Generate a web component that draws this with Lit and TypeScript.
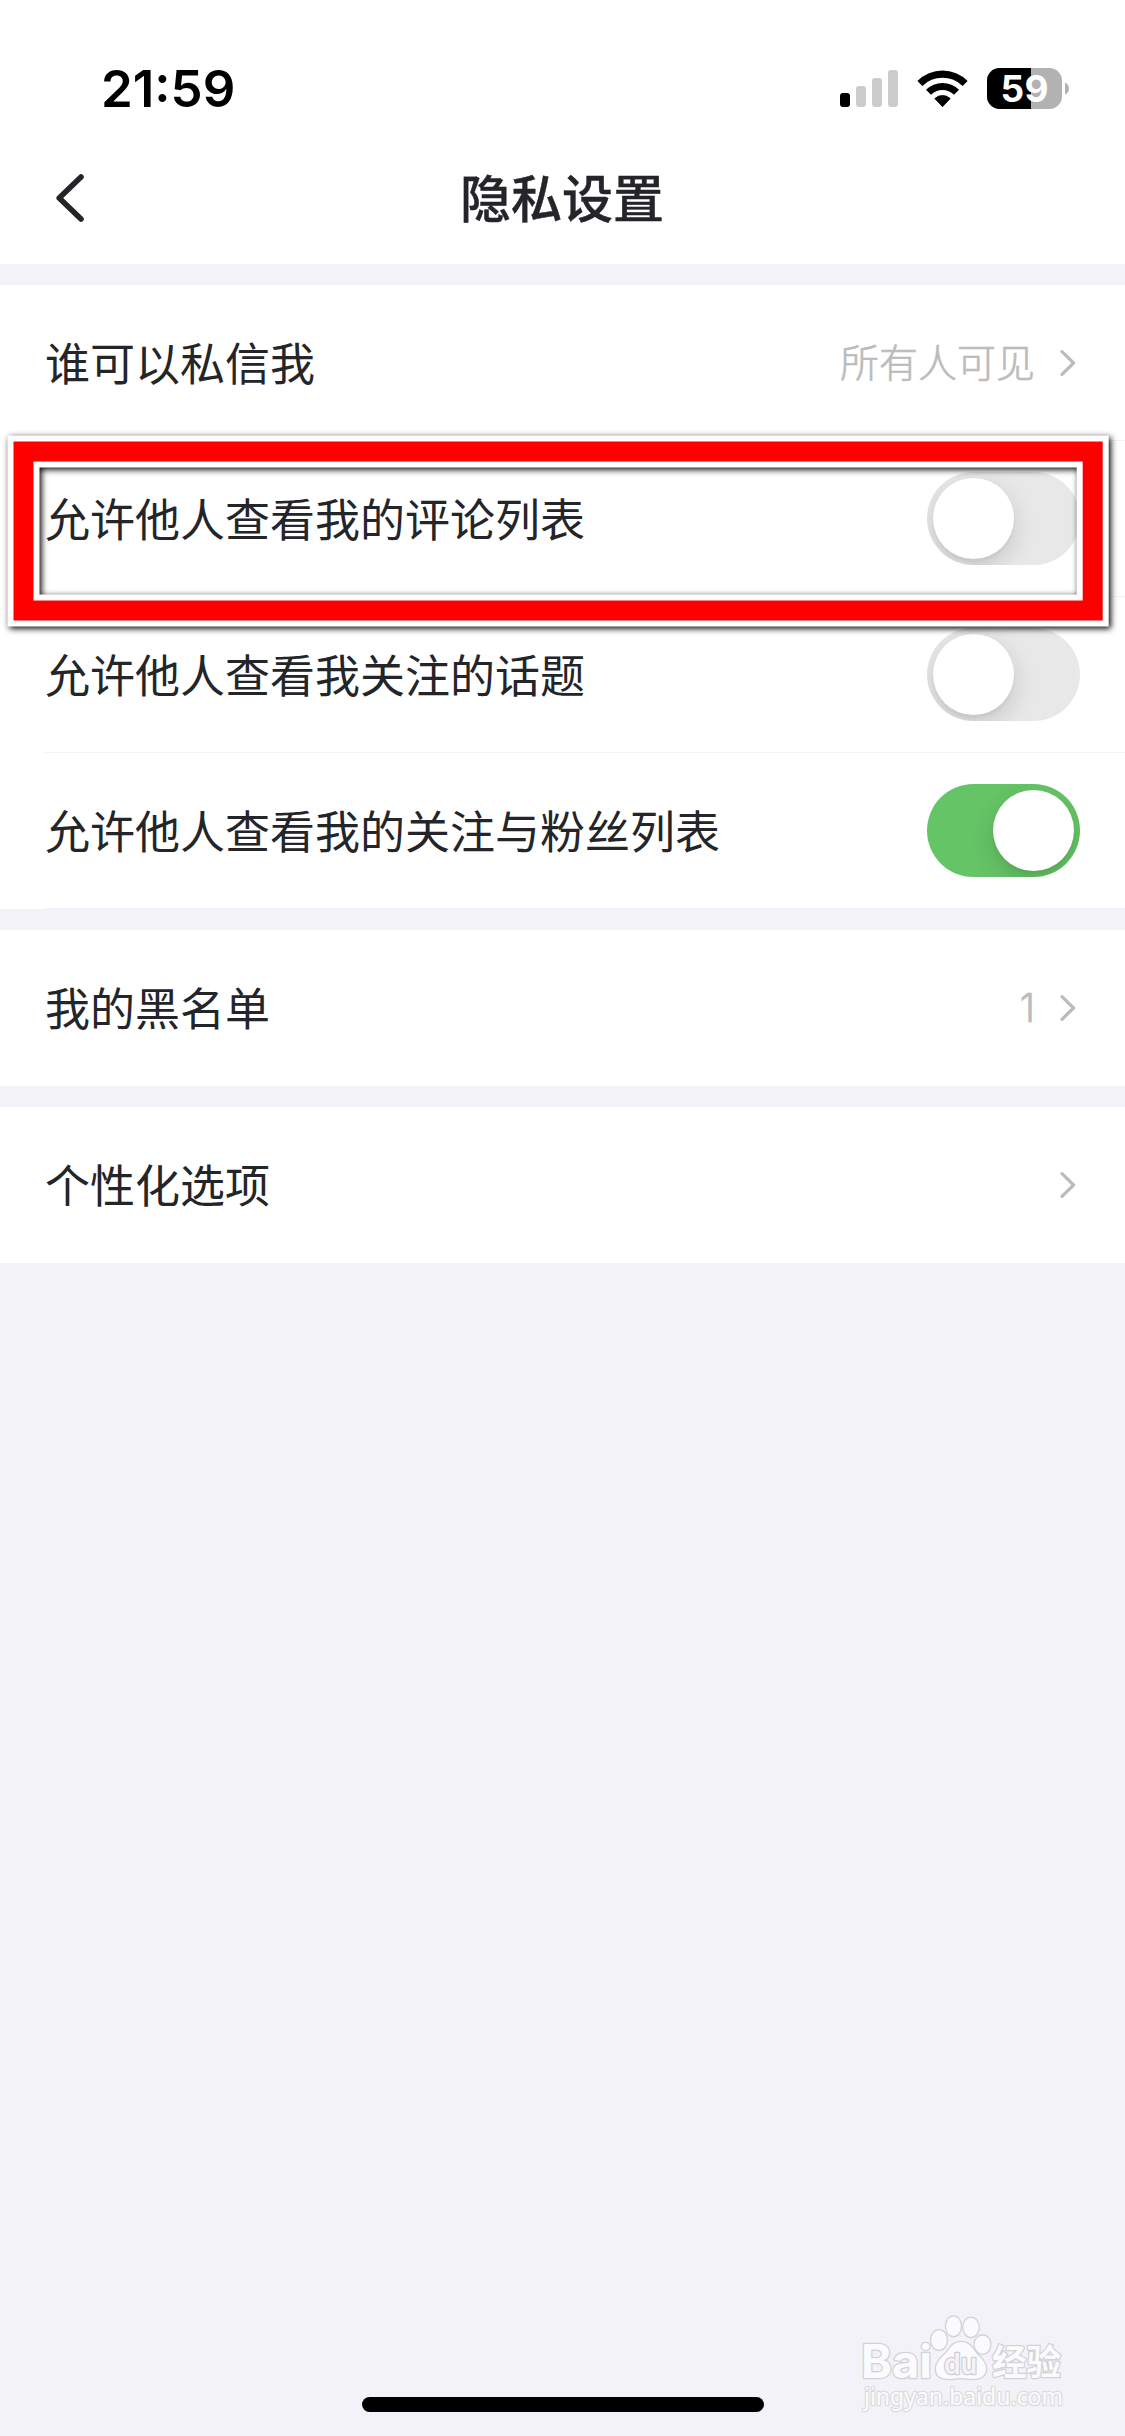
import { LitElement, html, css, svg, nothing } from "lit";
import { customElement, property } from "lit/decorators.js";

type Row = { label: string; value?: string; toggle?: boolean };

const GROUPS: Row[][] = [
  [
    { label: "谁可以私信我", value: "所有人可见" },
    { label: "允许他人查看我的评论列表", toggle: false },
    { label: "允许他人查看我关注的话题", toggle: false },
    { label: "允许他人查看我的关注与粉丝列表", toggle: true },
  ],
  [{ label: "我的黑名单", value: "1" }],
  [{ label: "个性化选项" }],
];

@customElement("status-bar")
class StatusBar extends LitElement {
  static styles = css`
    :host { display: flex; height: 138px; box-sizing: border-box; padding: 68px 56px 29px 101px; justify-content: space-between; align-items: flex-start; }
    .time { font: 600 51px/41px Inter, sans-serif; letter-spacing: 0; color: #000; }
    .icons { display: flex; align-items: flex-start; }
    .icons svg { display: block; overflow: visible; }
    .signal { margin: 2px 19px 0 0; }
    .wifi { margin: 2px 19px 0 0; }
    .level { font: 700 37px Inter, sans-serif; fill: #fff; }
  `;
  render() {
    return html`
      <div class="time">21:59</div>
      <div class="icons">
        <svg class="signal" width="58" height="37" viewBox="0 0 58 37">
          <rect x="0" y="23" width="10" height="14" rx="3" fill="#000" />
          <rect x="16" y="16" width="10" height="21" rx="3" fill="#ccc" />
          <rect x="32" y="8" width="10" height="29" rx="3" fill="#ccc" />
          <rect x="48" y="0" width="10" height="37" rx="3" fill="#ccc" />
        </svg>
        <svg class="wifi" width="51" height="37" viewBox="0 0 51 37">
          <path d="M0.4 11 A35.5 35.5 0 0 1 50.6 11 L45.6 16 A28.5 28.5 0 0 0 5.4 16 Z" />
          <path d="M9 19.8 A23.4 23.4 0 0 1 42 19.8 L37 24.8 A16.3 16.3 0 0 0 14 24.8 Z" />
          <path d="M17.8 28.6 A11 11 0 0 1 33.2 28.6 L25.5 36.7 Z" stroke="#000" stroke-width="0.8" stroke-linejoin="round" />
        </svg>
        <svg width="82" height="41" viewBox="0 0 82 41">
          <clipPath id="charge"><rect width="44" height="41" /></clipPath>
          <rect width="75" height="41" rx="12.5" fill="#b2b2b2" />
          <rect width="75" height="41" rx="12.5" fill="#000" clip-path="url(#charge)" />
          <path d="M78 14.5 Q82 16.5 82 20.5 Q82 24.5 78 26.5 Z" fill="#b2b2b2" />
          <text class="level" x="37.6" y="34.2" text-anchor="middle" textLength="48">59</text>
        </svg>
      </div>
    `;
  }
}

@customElement("nav-bar")
class NavBar extends LitElement {
  static styles = css`
    :host { display: grid; grid-template-columns: 120px 1fr 120px; align-items: center; height: 126px; box-sizing: border-box; padding-bottom: 6px; }
    svg { display: block; margin-left: 56px; }
    .title { text-align: center; font: 500 51px/60px "Noto Sans CJK SC", sans-serif; color: #242529; margin: 0 1px 5px 0; -webkit-text-stroke: 0.4px #242529; }
  `;
  render() {
    return html`
      <svg width="28" height="48" viewBox="0 0 28 48">
        <path d="M25 3 L3.2 24 L25 45" fill="none" stroke="#242529" stroke-width="5.6" stroke-linecap="round" stroke-linejoin="round" />
      </svg>
      <div class="title">隐私设置</div>
    `;
  }
}

@customElement("toggle-switch")
class ToggleSwitch extends LitElement {
  @property({ type: Boolean, reflect: true }) on = false;
  static styles = css`
    :host { display: flex; box-sizing: border-box; width: 153px; height: 93px; padding: 6px; border-radius: 46.5px; background: #e8e8e8; overflow: hidden; }
    :host([on]) { background: #65c466; justify-content: flex-end; }
    .knob { width: 81px; height: 81px; border-radius: 50%; background: #fff; box-shadow: 0 9px 24px rgba(0, 0, 0, 0.15), 0 3px 3px rgba(0, 0, 0, 0.04); }
  `;
  render() {
    return html`<div class="knob"></div>`;
  }
}

@customElement("settings-row")
class SettingsRow extends LitElement {
  @property({ attribute: false }) row!: Row;
  @property({ type: Boolean }) divided = false;
  static styles = css`
    :host { display: block; height: 156px; padding-left: 45px; background: #fff; box-sizing: border-box; }
    .line { display: flex; align-items: center; justify-content: space-between; height: 156px; box-sizing: border-box; padding-right: 45px; border-bottom: 1px solid transparent; }
    .divided { border-color: #f3f2f8; }
    .label { font: 400 45px/60px "Noto Sans CJK SC", sans-serif; color: #242529; margin-bottom: 1px; }
    .more { display: flex; align-items: center; gap: 25px; padding-right: 4px; }
    .value { font: 300 39px/52px Inter, "Noto Sans CJK SC", sans-serif; color: #bbb; -webkit-text-stroke: 0.6px #bbb; }
    svg { display: block; }
  `;
  render() {
    const { label, value, toggle } = this.row;
    return html`
      <div class="line ${this.divided ? "divided" : ""}">
        <span class="label">${label}</span>
        ${toggle === undefined
          ? html`<span class="more">
              ${value ? html`<span class="value">${value}</span>` : nothing}
              <svg width="16" height="26" viewBox="0 0 16 26">
                <path d="M2 1.7 L13.6 13 L2 24.3" fill="none" stroke="#bbb" stroke-width="3.2" stroke-linecap="round" stroke-linejoin="round" />
              </svg>
            </span>`
          : html`<toggle-switch ?on=${toggle}></toggle-switch>`}
      </div>
    `;
  }
}

@customElement("site-watermark")
class SiteWatermark extends LitElement {
  static styles = css`
    :host { display: block; }
    svg { display: block; overflow: visible; }
    .mark { fill: #fbfbfd; stroke: #d2d2d6; stroke-width: 2.6px; paint-order: stroke; stroke-linejoin: round; }
    .bai { font: 700 46px Inter, sans-serif; }
    .du { font: 600 28px Inter, sans-serif; fill: #f3f2f8; stroke: #cfcfd3; }
    .cn { font: 700 35px "Noto Sans CJK SC", sans-serif; }
    .url { font: 400 24px "Noto Sans", sans-serif; stroke: #dcdce1; }
  `;
  render() {
    const toes = [[79, 40, 7.8, 9.8], [93.5, 26.3, 7.4, 9.8], [111, 27.3, 7.6, 9.6], [122.5, 44.6, 7.8, 9.2]];
    return html`
      <svg width="210" height="124" viewBox="0 0 210 124">
        <text class="mark bai" x="1" y="78" textLength="71" lengthAdjust="spacingAndGlyphs">Bai</text>
        ${toes.map(([x, y, rx, ry]) => svg`<ellipse class="mark" cx=${x} cy=${y} rx=${rx} ry=${ry} />`)}
        <path class="mark" d="M101 42 C110 42 113 49 117 54 C122 59 126 63 126 69 C126 76 120 79 113 79 C108 79 106 78 101 78 C96 78 94 79 89 79 C81 79 76 76 76 69 C76 62 81 58 86 53 C90 49 92 42 101 42 Z" />
        <text class="mark du" x="84" y="73.5" textLength="33" lengthAdjust="spacingAndGlyphs">du</text>
        <text class="mark cn" x="132" y="75" textLength="69" lengthAdjust="spacingAndGlyphs">经验</text>
        <text class="mark url" x="4" y="104.5" textLength="199" lengthAdjust="spacingAndGlyphs">jingyan.baidu.com</text>
      </svg>
    `;
  }
}

@customElement("app-root")
class AppRoot extends LitElement {
  static styles = css`
    :host { display: block; position: relative; width: 1125px; height: 2436px; overflow: hidden; background: #f3f2f8; }
    .page { display: flex; flex-direction: column; height: 100%; }
    .head { background: #fff; }
    .groups { display: flex; flex-direction: column; gap: 21px; padding-top: 21px; }
    .home { width: 402px; height: 15px; margin: auto auto 24px 362px; border-radius: 7.5px; background: #000; }
    .frame { position: absolute; left: 0; top: 420px; filter: drop-shadow(2px 2px 3px #000); }
    .watermark { position: absolute; left: 860px; top: 2300px; }
  `;
  render() {
    return html`
      <div class="page">
        <div class="head">
          <status-bar></status-bar>
          <nav-bar></nav-bar>
        </div>
        <div class="groups">
          ${GROUPS.map((rows) => html`<div>
            ${rows.map((row) => html`<settings-row .row=${row} ?divided=${rows.length > 1}></settings-row>`)}
          </div>`)}
        </div>
        <div class="home"></div>
      </div>
      <svg class="frame" width="1125" height="225" viewBox="0 0 1125 225" fill="none">
        <rect x="23.5" y="31.5" width="1069.2" height="159" stroke="#fff" stroke-width="32" />
        <rect x="23.5" y="31.5" width="1069.2" height="159" stroke="#f00" stroke-width="20" />
      </svg>
      <site-watermark class="watermark"></site-watermark>
    `;
  }
}
